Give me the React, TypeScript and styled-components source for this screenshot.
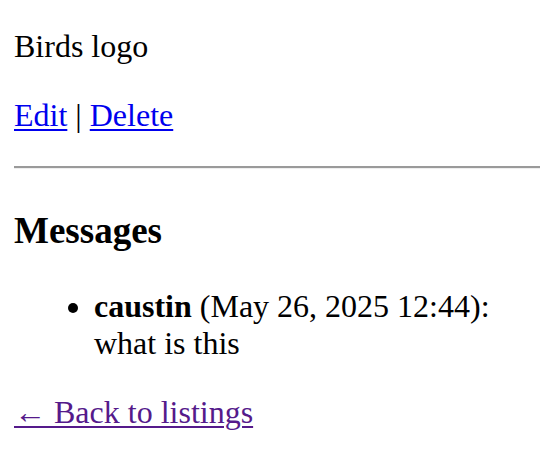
import React from "react";
import styled, { createGlobalStyle } from "styled-components";

const GlobalStyle = createGlobalStyle`
  html, body {
    margin: 0;
    padding: 0;
    background: #ffffff;
  }
  body {
    font-family: "Liberation Serif", "Times New Roman", serif;
    font-size: 32px;
    color: #000000;
  }
`;

const Page = styled.main`
  padding: 28px 0 0 14px;
`;

const Paragraph = styled.p<{ $top?: number; $bottom?: number }>`
  margin: ${(p) => p.$top ?? 32}px 0 ${(p) => p.$bottom ?? 32}px;
  line-height: 37px;
`;

const Link = styled.a<{ $visited?: boolean }>`
  color: ${(p) => (p.$visited ? "#551a8b" : "#0000ee")};
  text-decoration: underline;
  text-decoration-thickness: 2px;
  text-underline-offset: 3px;
`;

const Rule = styled.hr`
  margin: 0;
  height: 0;
  border: none;
  border-top: 2px solid #9a9a9a;
  border-bottom: 1px solid #eeeeee;
`;

const Heading = styled.h2`
  margin: 41px 0 37px;
  font-size: 37px;
  font-weight: bold;
  line-height: 41px;
`;

const MessageList = styled.ul`
  margin: 0 0 32px;
  padding-left: 80px;
  padding-right: 0;
  list-style: disc;
  line-height: 37px;
`;

const MessageItem = styled.li``;

const Author = styled.strong`
  font-weight: bold;
`;

type Message = { author: string; date: string; text: string };

const messages: Message[] = [
  { author: "caustin", date: "May 26, 2025 12:44", text: "what is this" },
];

export default function App() {
  return (
    <>
      <GlobalStyle />
      <Page>
        <Paragraph $top={0}>Birds logo</Paragraph>
        <Paragraph>
          <Link href="#edit">Edit</Link> | <Link href="#delete">Delete</Link>
        </Paragraph>
        <Rule />
        <Heading>Messages</Heading>
        <MessageList>
          {messages.map((m, i) => (
            <MessageItem key={i}>
              <Author>{m.author}</Author> ({m.date}): {m.text}
            </MessageItem>
          ))}
        </MessageList>
        <Paragraph $top={0} $bottom={0}>
          <Link href="#back" $visited>
            ← Back to listings
          </Link>
        </Paragraph>
      </Page>
    </>
  );
}
